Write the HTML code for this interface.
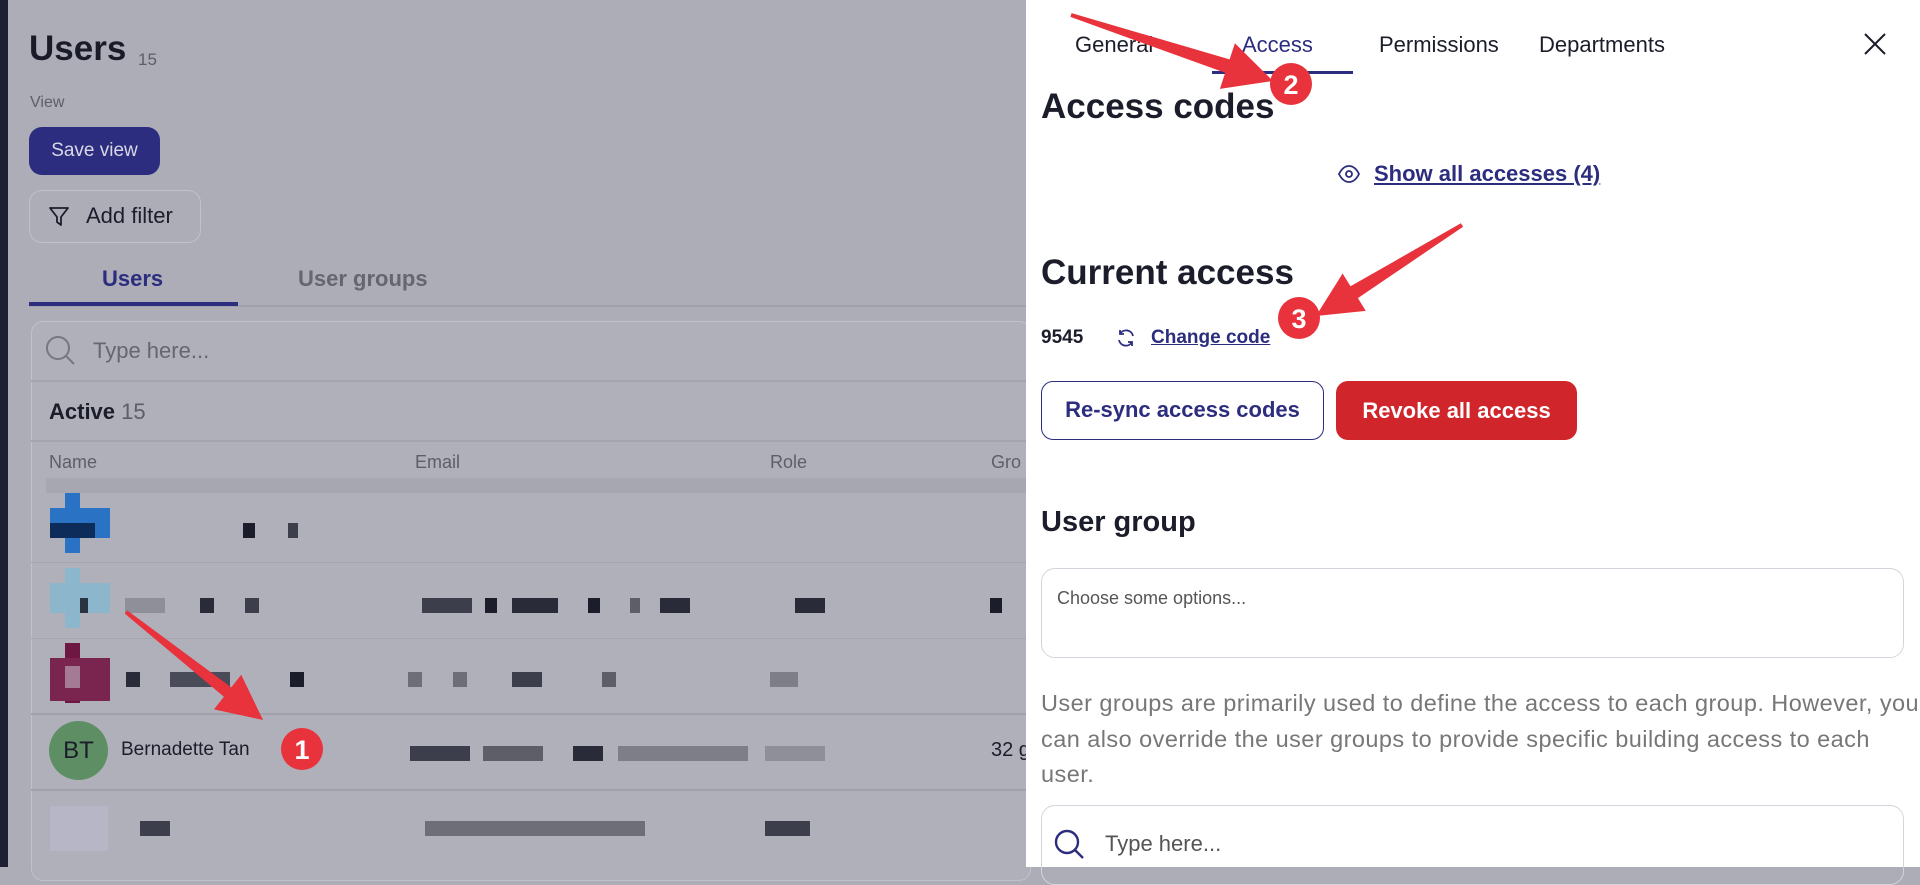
<!DOCTYPE html>
<html><head><meta charset="utf-8"><style>
*{box-sizing:border-box;margin:0;padding:0}
body{width:1920px;height:867px;overflow:hidden;position:relative;font-family:"Liberation Sans",sans-serif;background:#acadb7;color:#1c1d2b}
.a{position:absolute;white-space:nowrap}
.px{position:absolute}
</style></head><body>
<div class="px" style="left:0;top:0;width:8px;height:867px;background:#1d1f33"></div>
<div class="a" style="left:29px;top:29px;font-size:35px;font-weight:bold;color:#1a1b28">Users</div>
<div class="a" style="left:138px;top:50px;font-size:17px;color:#5d5e68">15</div>
<div class="a" style="left:30px;top:94px;font-size:16px;color:#5d5e68">View</div>
<div class="a" style="left:29px;top:127px;width:131px;height:48px;border-radius:13px;background:#2c2d7e;color:#d8d8e6;font-size:19px;line-height:48px;text-align:center">Save view</div>
<div class="a" style="left:29px;top:190px;width:172px;height:53px;border-radius:13px;border:1.5px solid #c0c1ca;font-size:22px;line-height:50px;padding-left:56px;color:#1c1d2b">Add filter</div>
<svg class="px" style="left:48px;top:205px" width="22" height="24" viewBox="0 0 22 24"><path d="M2 3h18l-7 9v8l-4-3v-5z" fill="none" stroke="#1c1d2b" stroke-width="1.8" stroke-linejoin="round"/></svg>
<div class="a" style="left:102px;top:266px;font-size:22px;font-weight:bold;color:#2c2d7e">Users</div>
<div class="a" style="left:298px;top:266px;font-size:22px;font-weight:bold;color:#65666f">User groups</div>
<div class="px" style="left:29px;top:305px;width:1000px;height:2px;background:#a0a1ab"></div>
<div class="px" style="left:29px;top:302px;width:209px;height:4px;background:#2c2d7e"></div>
<div class="px" style="left:31px;top:321px;width:1000px;height:560px;border:1.5px solid #c0c1ca;border-radius:12px;background:#afb0ba"></div>
<svg class="px" style="left:44px;top:334px" width="34" height="34" viewBox="0 0 34 34"><circle cx="14" cy="14" r="11" fill="none" stroke="#767781" stroke-width="2"/><path d="M22 22l8 8" stroke="#767781" stroke-width="2"/></svg>
<div class="a" style="left:93px;top:338px;font-size:22px;color:#65666f">Type here...</div>
<div class="px" style="left:31px;top:380px;width:1000px;height:2px;background:#a3a4ae"></div>
<div class="a" style="left:49px;top:399px;font-size:22px;font-weight:bold;color:#1c1d2b">Active <span style="font-weight:normal;color:#5d5e68">15</span></div>
<div class="px" style="left:31px;top:440px;width:1000px;height:2px;background:#a3a4ae"></div>
<div class="a" style="left:49px;top:452px;font-size:18px;color:#5d5e68">Name</div>
<div class="a" style="left:415px;top:452px;font-size:18px;color:#5d5e68">Email</div>
<div class="a" style="left:770px;top:452px;font-size:18px;color:#5d5e68">Role</div>
<div class="a" style="left:991px;top:452px;font-size:18px;color:#5d5e68">Gro</div>
<div class="px" style="left:46px;top:478px;width:980px;height:15px;background:#a6a7b1"></div>
<div class="px" style="left:31px;top:562px;width:1000px;height:1px;background:#a3a4ae"></div>
<div class="px" style="left:31px;top:638px;width:1000px;height:1px;background:#a3a4ae"></div>
<div class="px" style="left:31px;top:713px;width:1000px;height:2px;background:#a0a1ab"></div>
<div class="px" style="left:31px;top:789px;width:1000px;height:2px;background:#a0a1ab"></div>
<div class="px" style="left:65px;top:493px;width:15px;height:60px;background:#2a73c4"></div>
<div class="px" style="left:50px;top:508px;width:60px;height:30px;background:#2a73c4"></div>
<div class="px" style="left:50px;top:523px;width:45px;height:15px;background:#0e2c5a"></div>
<div class="px" style="left:65px;top:568px;width:15px;height:60px;background:#8bb6cc"></div>
<div class="px" style="left:50px;top:583px;width:60px;height:30px;background:#8bb6cc"></div>
<div class="px" style="left:80px;top:598px;width:8px;height:15px;background:#2a3340"></div>
<div class="px" style="left:65px;top:643px;width:15px;height:60px;background:#6e1743"></div>
<div class="px" style="left:50px;top:658px;width:60px;height:43px;background:#7a2550"></div>
<div class="px" style="left:65px;top:666px;width:15px;height:22px;background:#a47a94"></div>
<div class="px" style="left:50px;top:806px;width:58px;height:45px;background:#b6b6c6"></div>
<div class="px" style="left:243px;top:523px;width:12px;height:15px;background:#1c1d2b"></div>
<div class="px" style="left:288px;top:523px;width:10px;height:15px;background:#3d3e4c"></div>
<div class="px" style="left:125px;top:598px;width:40px;height:15px;background:#8e8f99"></div>
<div class="px" style="left:200px;top:598px;width:14px;height:15px;background:#2a2b38"></div>
<div class="px" style="left:245px;top:598px;width:14px;height:15px;background:#3d3e4c"></div>
<div class="px" style="left:422px;top:598px;width:50px;height:15px;background:#3d3e4c"></div>
<div class="px" style="left:485px;top:598px;width:12px;height:15px;background:#1c1d2b"></div>
<div class="px" style="left:512px;top:598px;width:46px;height:15px;background:#2a2b38"></div>
<div class="px" style="left:588px;top:598px;width:12px;height:15px;background:#1c1d2b"></div>
<div class="px" style="left:630px;top:598px;width:10px;height:15px;background:#5d5e68"></div>
<div class="px" style="left:660px;top:598px;width:30px;height:15px;background:#2a2b38"></div>
<div class="px" style="left:795px;top:598px;width:30px;height:15px;background:#2a2b38"></div>
<div class="px" style="left:990px;top:598px;width:12px;height:15px;background:#1c1d2b"></div>
<div class="px" style="left:126px;top:672px;width:14px;height:15px;background:#2a2b38"></div>
<div class="px" style="left:170px;top:672px;width:60px;height:15px;background:#4a4b58"></div>
<div class="px" style="left:290px;top:672px;width:14px;height:15px;background:#1c1d2b"></div>
<div class="px" style="left:408px;top:672px;width:14px;height:15px;background:#6d6e78"></div>
<div class="px" style="left:453px;top:672px;width:14px;height:15px;background:#6d6e78"></div>
<div class="px" style="left:512px;top:672px;width:30px;height:15px;background:#3d3e4c"></div>
<div class="px" style="left:602px;top:672px;width:14px;height:15px;background:#5d5e68"></div>
<div class="px" style="left:770px;top:672px;width:28px;height:15px;background:#7d7e88"></div>
<div class="px" style="left:410px;top:746px;width:60px;height:15px;background:#3d3e4c"></div>
<div class="px" style="left:483px;top:746px;width:60px;height:15px;background:#5d5e68"></div>
<div class="px" style="left:573px;top:746px;width:30px;height:15px;background:#2a2b38"></div>
<div class="px" style="left:618px;top:746px;width:130px;height:15px;background:#7d7e88"></div>
<div class="px" style="left:765px;top:746px;width:60px;height:15px;background:#8e8f99"></div>
<div class="a" style="left:991px;top:739px;font-size:20px;color:#1c1d2b">32 g</div>
<div class="px" style="left:140px;top:821px;width:30px;height:15px;background:#3d3e4c"></div>
<div class="px" style="left:425px;top:821px;width:220px;height:15px;background:#6d6e78"></div>
<div class="px" style="left:765px;top:821px;width:45px;height:15px;background:#3d3e4c"></div>
<div class="px" style="left:49px;top:721px;width:59px;height:59px;border-radius:50%;background:#5e8f64;color:#1c1d2b;font-size:24px;line-height:59px;text-align:center">BT</div>
<div class="a" style="left:121px;top:739px;font-size:19px;color:#1c1d2b">Bernadette Tan</div>

<div class="px" style="left:1026px;top:0;width:894px;height:867px;background:#fff"></div>
<div class="a" style="left:1075px;top:32px;font-size:22px;color:#1c1d2b">General</div>
<div class="a" style="left:1242px;top:32px;font-size:22px;color:#2c2d7e">Access</div>
<div class="a" style="left:1379px;top:32px;font-size:22px;color:#1c1d2b">Permissions</div>
<div class="a" style="left:1539px;top:32px;font-size:22px;color:#1c1d2b">Departments</div>
<div class="px" style="left:1212px;top:71px;width:141px;height:3px;background:#2c2d7e"></div>
<svg class="px" style="left:1863px;top:32px" width="24" height="24" viewBox="0 0 24 24"><path d="M2 2l20 20M22 2L2 22" stroke="#1c1d2b" stroke-width="2"/></svg>
<div class="a" style="left:1041px;top:87px;font-size:35px;font-weight:bold;color:#1c1d2b">Access codes</div>
<svg class="px" style="left:1337px;top:164px" width="24" height="20" viewBox="0 0 24 20"><path d="M2 10C5 4 9 2 12 2s7 2 10 8c-3 6-7 8-10 8s-7-2-10-8z" fill="none" stroke="#2c2d7e" stroke-width="1.8"/><circle cx="12" cy="10" r="3" fill="none" stroke="#2c2d7e" stroke-width="1.8"/></svg>
<div class="a" style="left:1374px;top:161px;font-size:22px;font-weight:bold;color:#2c2d7e;text-decoration:underline">Show all accesses (4)</div>
<div class="a" style="left:1041px;top:253px;font-size:35px;font-weight:bold;color:#1c1d2b">Current access</div>
<div class="a" style="left:1041px;top:327px;font-size:19px;font-weight:bold;color:#1c1d2b">9545</div>
<svg class="px" style="left:1115px;top:327px" width="22" height="22" viewBox="0 0 22 22"><path d="M18 9a7 7 0 0 0-13-2M4 13a7 7 0 0 0 13 2" fill="none" stroke="#2c2d7e" stroke-width="1.8"/><path d="M5 3v4h4M17 19v-4h-4" fill="none" stroke="#2c2d7e" stroke-width="1.8"/></svg>
<div class="a" style="left:1151px;top:327px;font-size:19px;font-weight:bold;color:#2c2d7e;text-decoration:underline">Change code</div>
<div class="a" style="left:1041px;top:381px;width:283px;height:59px;border:1.5px solid #2c2d7e;border-radius:12px;font-size:22px;font-weight:bold;color:#2c2d7e;line-height:56px;text-align:center">Re-sync access codes</div>
<div class="a" style="left:1336px;top:381px;width:241px;height:59px;border-radius:12px;background:#d0262b;font-size:22px;font-weight:bold;color:#fff;line-height:59px;text-align:center">Revoke all access</div>
<div class="a" style="left:1041px;top:506px;font-size:29px;font-weight:bold;color:#1c1d2b">User group</div>
<div class="a" style="left:1041px;top:568px;width:863px;height:90px;border:1.5px solid #d4d5dc;border-radius:14px;font-size:18px;color:#555;padding:19px 0 0 15px">Choose some options...</div>
<div class="px" style="left:1041px;top:686px;width:879px;font-size:23.5px;letter-spacing:0.45px;line-height:35.5px;color:#777">User groups are primarily used to define the access to each group. However, you can also override the user groups to provide specific building access to each user.</div>
<div class="px" style="left:1041px;top:805px;width:863px;height:80px;border:1.5px solid #d4d5dc;border-radius:14px"></div>
<svg class="px" style="left:1053px;top:828px" width="34" height="34" viewBox="0 0 34 34"><circle cx="14" cy="14" r="11" fill="none" stroke="#2c2d7e" stroke-width="2.4"/><path d="M22 22l8 8" stroke="#2c2d7e" stroke-width="2.4"/></svg>
<div class="a" style="left:1105px;top:831px;font-size:22px;color:#555">Type here...</div>

<svg class="px" style="left:0;top:0" width="1920" height="867">
<g fill="#e8323c">
<polygon points="124.8,613.6 223.9,696.8 214,709.4 263,720 241.2,674.8 231.3,687.4 127.2,610.4"/>
<polygon points="1070.4,16.9 1225.2,72.8 1219.9,88.9 1273,81 1234.9,43.3 1229.6,59.4 1071.6,13.1"/>
<polygon points="1460.9,223.3 1350.5,286.3 1342.6,273.5 1316,316 1365.8,310.9 1357.9,298.1 1463.1,226.7"/>
<circle cx="302" cy="749" r="21"/><circle cx="1291" cy="84" r="21"/><circle cx="1299" cy="318" r="21"/>
</g>
<g fill="#fff" font-family="Liberation Sans,sans-serif" font-weight="bold" font-size="27" text-anchor="middle">
<text x="302" y="759">1</text><text x="1291" y="94">2</text><text x="1299" y="328">3</text>
</g>
</svg>
</body></html>
